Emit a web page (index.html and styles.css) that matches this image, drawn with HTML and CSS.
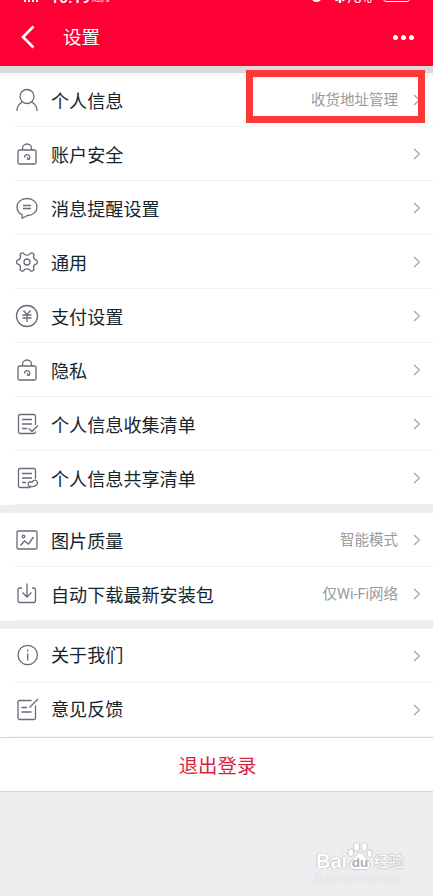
FILE: index.html
```html
<!DOCTYPE html>
<html lang="zh-CN">
<head>
  <meta charset="UTF-8">
  <title>设置</title>
  <link rel="stylesheet" href="styles.css">
</head>
<body>
  <!-- 公用图标 -->
  <svg class="defs" width="0" height="0">
    <symbol id="arrow" viewBox="0 0 8 12"><path d="M1 1l5.500 5L1 11"/></symbol>
    <symbol id="lock" viewBox="0 0 24 24">
      <rect x="3" y="8" width="18" height="14" rx="1.500"/>
      <path d="M7.500 8V6.500a4.500 4.500 0 0 1 9 0V8M9.500 15.500a2.600 2.600 0 1 1 3.500 2.200M12.500 15.200v2.500"/>
    </symbol>
  </svg>

  <header class="header">
    <div class="status">
      <span class="signal"><i></i><i></i><i></i><i></i></span>
      <span class="time">10:19</span>
      <span class="speed">KB/s</span>
      <span class="clock"></span>
      <span class="percent">✱78%</span>
      <span class="battery"></span>
    </div>
    <div class="title-bar">
      <svg class="back" viewBox="0 0 14 24"><path d="M12.500 1.500L2 12l10.500 10.500"/></svg>
      <h1>设置</h1>
      <div class="more"><i></i><i></i><i></i></div>
    </div>
  </header>

  <main>
    <section class="group first">
      <div class="row">
        <svg class="icon" viewBox="0 0 24 24"><circle cx="12" cy="8.500" r="7"/><path d="M2 23c0-4 2.200-7.500 5.500-9M22 23c0-4-2.200-7.500-5.500-9"/></svg>
        <span class="label">个人信息</span>
        <span class="value">收货地址管理</span>
        <svg class="arrow"><use href="#arrow"/></svg>
      </div>
      <div class="row">
        <svg class="icon"><use href="#lock"/></svg>
        <span class="label">账户安全</span>
        <svg class="arrow"><use href="#arrow"/></svg>
      </div>
      <div class="row">
        <svg class="icon" viewBox="0 0 24 24"><path d="M7 22v-3.300C4 17.300 2 14.500 2 11c0-5 4.300-8.500 10-8.500S22 6 22 11s-4.300 8.500-9.500 8.500C10.500 20.800 9 21.500 7 22zM8 9.500h8M8 12.500h8"/></svg>
        <span class="label">消息提醒设置</span>
        <svg class="arrow"><use href="#arrow"/></svg>
      </div>
      <div class="row">
        <svg class="icon" viewBox="0 0 24 24"><path d="M9.500 4.500c1.500.8 3.500.8 5 0l1-1.500c1-.6 3 .5 3.500 1.500l-.5 2c0 1.600 1 3 2.500 3.400l1 .6c.5 1 .5 2 0 3l-1 .6c-1.500.4-2.500 1.800-2.500 3.400l.5 2c-.5 1-2.500 2.100-3.500 1.500l-1-1.500c-1.500-.8-3.500-.8-5 0l-1 1.500c-1 .6-3-.5-3.500-1.500l.5-2c0-1.600-1-3-2.500-3.400l-1-.6c-.5-1-.5-2 0-3l1-.6c1.500-.4 2.500-1.800 2.500-3.400l-.5-2C5.500 3.500 7.500 2.400 8.500 3z"/><circle cx="12" cy="12" r="3"/></svg>
        <span class="label">通用</span>
        <svg class="arrow"><use href="#arrow"/></svg>
      </div>
      <div class="row">
        <svg class="icon" viewBox="0 0 24 24"><circle cx="12" cy="12" r="10.500"/><path d="M8.500 6.500l3.500 4 3.500-4M12 10.500V18M7.500 11h9M7.500 14h9"/></svg>
        <span class="label">支付设置</span>
        <svg class="arrow"><use href="#arrow"/></svg>
      </div>
      <div class="row">
        <svg class="icon"><use href="#lock"/></svg>
        <span class="label">隐私</span>
        <svg class="arrow"><use href="#arrow"/></svg>
      </div>
      <div class="row">
        <svg class="icon" viewBox="0 0 24 24"><path d="M20.500 13V4A1.500 1.500 0 0 0 19 2.500H5A1.500 1.500 0 0 0 3.500 4v16A1.500 1.500 0 0 0 5 21.500h13.500a2 2 0 0 0 2-2M7 7.500h10M7 12h10M7 16.500h5.500M14 16.500l3 3 6-6"/></svg>
        <span class="label">个人信息收集清单</span>
        <svg class="arrow"><use href="#arrow"/></svg>
      </div>
      <div class="row">
        <svg class="icon" viewBox="0 0 24 24"><path d="M20.500 13V4A1.500 1.500 0 0 0 19 2.500H5A1.500 1.500 0 0 0 3.500 4v16A1.500 1.500 0 0 0 5 21.500h10.500M7 7.500h10M7 12h10M7 16.500h4"/><path d="M14.500 16h3c.5-1.500 2-2.300 3.500-1.500 1.700.8 2 3 .8 4.200-1.300 1.300-3.300 2-5.300 1.800h-1.500c-2.500-.3-2.500-4.200-.5-4.500z"/></svg>
        <span class="label">个人信息共享清单</span>
        <svg class="arrow"><use href="#arrow"/></svg>
      </div>
    </section>

    <section class="group">
      <div class="row">
        <svg class="icon" viewBox="0 0 24 24"><rect x="2" y="3" width="20" height="18" rx="1.200"/><path d="M5.500 17.500l4-4.500 4 3 5-7"/><circle cx="8.500" cy="8.500" r="1.300"/></svg>
        <span class="label">图片质量</span>
        <span class="value">智能模式</span>
        <svg class="arrow"><use href="#arrow"/></svg>
      </div>
      <div class="row">
        <svg class="icon" viewBox="0 0 24 24"><path d="M7 6H5a2 2 0 0 0-2 2v10.500a2 2 0 0 0 2 2h13.500a2 2 0 0 0 2-2V8a2 2 0 0 0-2-2H17M12 1.500v13M7.500 10.500l4.500 4.500 4.500-4.500"/></svg>
        <span class="label">自动下载最新安装包</span>
        <span class="value">仅Wi-Fi网络</span>
        <svg class="arrow"><use href="#arrow"/></svg>
      </div>
    </section>

    <section class="group last">
      <div class="row">
        <svg class="icon" viewBox="0 0 24 24"><circle cx="12.700" cy="11" r="9.700"/><path d="M12.700 9.500v7M12.700 5.500v2"/></svg>
        <span class="label">关于我们</span>
        <svg class="arrow"><use href="#arrow"/></svg>
      </div>
      <div class="row">
        <svg class="icon" viewBox="0 0 24 24"><path d="M16.500 2.500h-12A1.500 1.500 0 0 0 3 4v16a1.500 1.500 0 0 0 1.500 1.500H19a1.500 1.500 0 0 0 1.500-1.500V7.500M23 1l-8.500 8.500M6.500 9.500H12M6.500 14h10"/></svg>
        <span class="label">意见反馈</span>
        <svg class="arrow"><use href="#arrow"/></svg>
      </div>
    </section>

    <button class="logout">退出登录</button>
  </main>

  <!-- 标注框 -->
  <div class="mark"></div>

  <div class="watermark">
    <div class="brand">
      <span class="bai">Bai</span>
      <svg class="paw" viewBox="0 0 26 30">
        <ellipse cx="3.500" cy="11" rx="3" ry="4"/><ellipse cx="9.500" cy="5" rx="3" ry="4.300"/>
        <ellipse cx="17.500" cy="5" rx="3" ry="4.300"/><ellipse cx="23" cy="12" rx="2.800" ry="4"/>
        <path d="M13 11c4 0 5 5 8 7.500 4 3.500 3 10-2 10H7c-5 0-6-6.500-2-10C8 16 9 11 13 11z"/>
        <text x="13" y="25.500">du</text>
      </svg>
      <span class="cn">经验</span>
    </div>
    <div class="site">jingyan.baidu.com</div>
  </div>
</body>
</html>
```

FILE: styles.css
```css
* {
  box-sizing: border-box;
}

body {
  margin: 0;
  height: 896px;
  position: relative;
  overflow: hidden;
  background-color: #ededef;
  color: #14252f;
  font-family: Roboto, "Noto Sans CJK SC", sans-serif;
}

.defs {
  display: block;
  height: 0;
}

svg {
  fill: none;
}

.header {
  height: 66px;
  overflow: hidden;
  background-color: #ff0034;
  color: #fff;
}

/* 状态栏，只露出底部 */
.status {
  display: flex;
  align-items: flex-end;
  height: 20px;
  margin-top: -12px;
  padding: 0 23px 1px 24px;
  line-height: 18px;
}

.signal {
  display: flex;
  gap: 2px;
  width: 26px;
  padding-bottom: 5px;
}

.signal i {
  width: 2px;
  height: 9px;
  background-color: #fff;
}

.time {
  width: 42px;
  font-size: 16px;
  font-weight: 500;
}

.speed {
  flex: 1;
  font-size: 8px;
  line-height: 14px;
}

.clock {
  width: 11px;
  height: 11px;
  margin: 0 12px 5px 0;
  border: 2px solid #fff;
  border-radius: 50%;
}

.percent {
  width: 49px;
  font-size: 14px;
  white-space: nowrap;
}

.battery {
  width: 27px;
  height: 12px;
  margin-bottom: 5px;
  border: 1px solid #fff;
  border-radius: 3px;
}

.title-bar {
  display: flex;
  align-items: center;
  height: 58px;
  padding: 0 19px 0 21px;
}

.back {
  width: 14px;
  height: 24px;
  stroke: #fff;
  stroke-width: 2.6;
}

.title-bar h1 {
  flex: 1;
  margin: 0 0 0 28px;
  padding-top: 2px;
  font-size: 18.5px;
  font-weight: 400;
  line-height: 28px;
}

.more {
  display: flex;
  gap: 3px;
}

.more i {
  width: 5px;
  height: 5px;
  border-radius: 50%;
  background-color: #fff;
}

.group {
  margin-bottom: 8px;
  background-color: #fff;
}

.first {
  border-top: 7px solid #dadadb;
  background-image: linear-gradient(#f5f5f5, #fff 7px);
}

.last {
  margin-bottom: 0;
}

.row {
  display: flex;
  align-items: center;
  height: 54px;
  margin-left: 14px;
  padding: 0 12px 0 1px;
  border-bottom: 1px solid #f2f2f3;
}

.icon {
  width: 24px;
  height: 24px;
  stroke: #696c78;
  stroke-width: 1.3;
}

.label {
  flex: 1;
  margin-left: 12px;
  padding-top: 4px;
  font-size: 18.1px;
  line-height: 26px;
}

.last .label {
  padding-top: 1px;
}

.value {
  margin-right: 15px;
  padding-top: 3px;
  color: #999;
  font-size: 14.5px;
  line-height: 20px;
}

.arrow {
  width: 8px;
  height: 12px;
  stroke: #a0a0a4;
  stroke-width: 1.1;
}

.logout {
  display: block;
  width: 100%;
  height: 55px;
  padding: 0 0 1px 2px;
  border: solid #d6d6d8;
  border-width: 1px 0;
  background-color: #fff;
  color: #dc1f3c;
  font-family: inherit;
  font-size: 19.4px;
}

.mark {
  position: absolute;
  left: 246px;
  top: 70px;
  width: 179px;
  height: 53px;
  border: 7px solid #fd3937;
}

.watermark {
  position: absolute;
  left: 316px;
  top: 842px;
  width: 92px;
  color: #fff;
  text-shadow: 0 0 1px #999, 0 0 1px #aaa;
}

.brand {
  display: flex;
  align-items: flex-end;
  height: 29px;
  font: bold 20px/20px "Liberation Sans", sans-serif;
}

.bai {
  width: 31px;
}

.paw {
  flex-shrink: 0;
  width: 26px;
  height: 29px;
  fill: #fff;
  stroke: #b8b8ba;
  stroke-width: .7;
}

.paw text {
  fill: #b0b0b4;
  stroke: none;
  font-size: 14px;
  text-anchor: middle;
  text-shadow: none;
}

.cn {
  margin-left: 1px;
  white-space: nowrap;
  font-family: "Noto Sans CJK SC", sans-serif;
  font-size: 15px;
  font-weight: 500;
}

.site {
  font: 11px/14px "Liberation Sans", sans-serif;
  text-shadow: 0 0 1px #aaa;
}
```
